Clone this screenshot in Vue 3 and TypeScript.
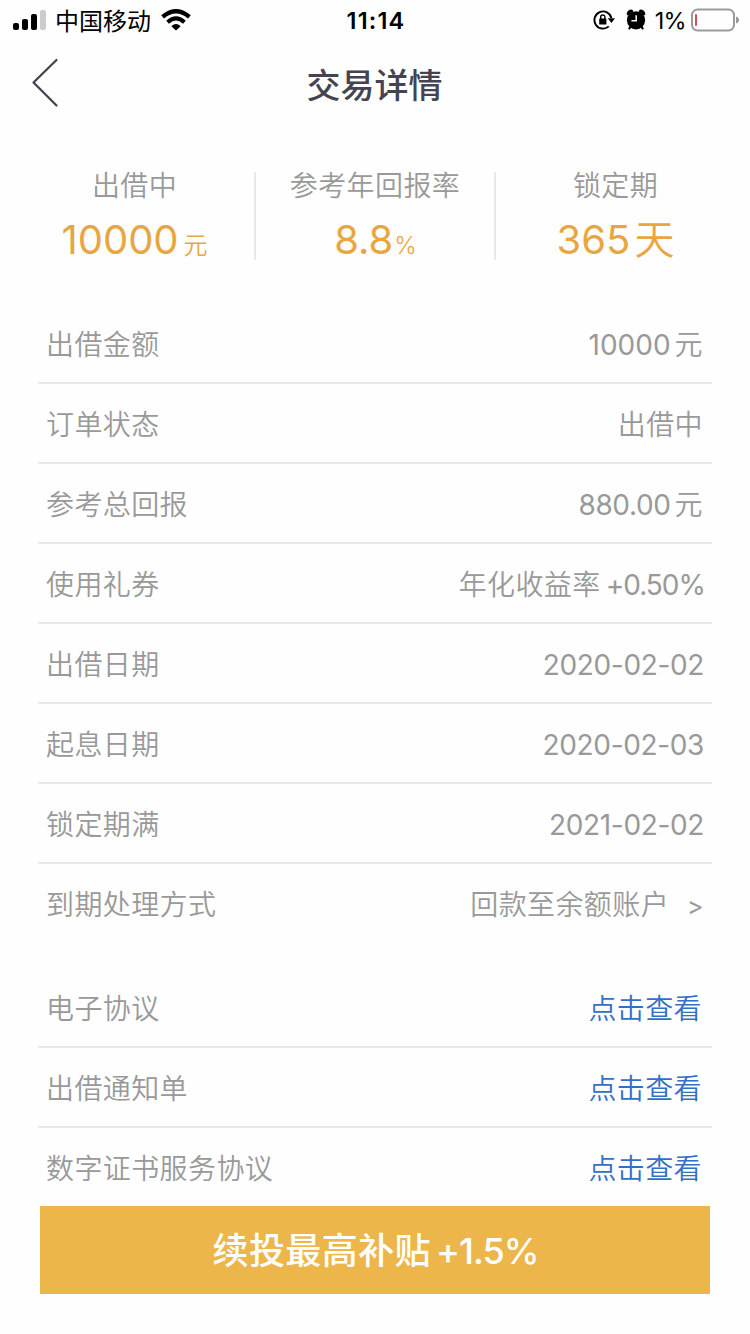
<script setup lang="ts">
interface Row {
  label: string
  value: string
  latin?: string
  unit?: string
  arrow?: boolean
  cls?: string
}

const details: Row[] = [
  { label: '出借金额', value: '', latin: '10000', unit: '元', cls: 'amount' },
  { label: '订单状态', value: '出借中' },
  { label: '参考总回报', value: '', latin: '880.00', unit: '元', cls: 'total' },
  { label: '使用礼券', value: '年化收益率', latin: '+0.50%', cls: 'coupon' },
  { label: '出借日期', value: '', latin: '2020-02-02', cls: 'date' },
  { label: '起息日期', value: '', latin: '2020-02-03', cls: 'date' },
  { label: '锁定期满', value: '', latin: '2021-02-02', cls: 'date' },
  { label: '到期处理方式', value: '回款至余额账户', arrow: true },
]

const documents: string[] = ['电子协议', '出借通知单', '数字证书服务协议']
</script>

<template>
  <main class="screen">
    <header class="status">
      <div class="side">
        <svg class="signal" width="34" height="22" viewBox="0 0 34 22">
          <rect x="0" y="14" width="6" height="7" rx="2" />
          <rect x="9" y="10" width="6" height="11" rx="2" />
          <rect x="18" y="5" width="6" height="16" rx="2" />
          <rect x="27" y="1" width="6" height="20" rx="2" fill="#ccc" />
        </svg>
        <span class="carrier">中国移动</span>
        <svg class="wifi" width="30" height="22" viewBox="0 0 30 22">
          <path d="M1.6 7.9Q15-3.5 28.4 7.9" fill="none" stroke="#000" stroke-width="4.3" />
          <path d="M6.6 13.2Q15 5.6 23.4 13.2" fill="none" stroke="#000" stroke-width="4" />
          <path d="M10.3 17.2Q15 13 19.7 17.2L15 21.6Z" />
        </svg>
      </div>
      <span class="clock">11:14</span>
      <div class="side right">
        <svg class="lock" width="22" height="22" viewBox="0 0 22 22">
          <path d="M15.8 17.4A8.6 8.6 0 1 1 18.4 9" fill="none" stroke="#000" stroke-width="1.9" />
          <path d="M14.7 9.3H22L18.4 14Z" />
          <rect x="6.2" y="9.4" width="7.2" height="6.2" rx=".7" />
          <path d="M7.7 10V8.1a2.1 2.1 0 0 1 4.2 0V10" fill="none" stroke="#000" stroke-width="1.4" />
        </svg>
        <svg class="alarm" width="20" height="22" viewBox="0 0 20 22">
          <circle cx="10" cy="11.3" r="9.1" />
          <path d="M4.5 17.5L3 20.3M15.5 17.5L17 20.3" stroke="#000" stroke-width="2.2" />
          <path d="M.6 5.2Q1 .6 6 .4L7.5 2.2L2 6.8ZM19.4 5.2Q19 .6 14 .4L12.5 2.2L18 6.8Z" />
          <path d="M10.2 6.2V11.8H5.4" fill="none" stroke="#fff" stroke-width="1.5" />
        </svg>
        <span class="percent">1%</span>
        <svg class="battery" width="48" height="24" viewBox="0 0 48 24">
          <rect x="1" y="1.5" width="42" height="21" rx="5.5" fill="none" stroke="#999" stroke-width="2" />
          <rect x="4" y="6" width="2" height="12" rx="1" fill="#d34d55" />
          <path d="M45 8.5Q48 9.5 48 12T45 15.5Z" fill="#999" />
        </svg>
      </div>
    </header>

    <nav class="nav">
      <svg class="back" width="28" height="50" viewBox="0 0 28 50">
        <path d="M25.5 2L2.5 24.5L25.5 47.5" fill="none" stroke="#454350" stroke-width="2.3" stroke-linecap="round" stroke-linejoin="round" />
      </svg>
      <h1>交易详情</h1>
    </nav>

    <section class="summary">
      <div class="metric first">
        <span class="caption">出借中</span>
        <div class="figure principal">10000<small>元</small></div>
      </div>
      <div class="metric second">
        <span class="caption">参考年回报率</span>
        <div class="figure rate">8.8<small>%</small></div>
      </div>
      <div class="metric third">
        <span class="caption">锁定期</span>
        <div class="figure term">365<span class="day">天</span></div>
      </div>
    </section>

    <section class="list">
      <div v-for="row in details" :key="row.label" class="row">
        <span>{{ row.label }}</span>
        <div class="value">
          <span v-if="row.value">{{ row.value }}</span>
          <span v-if="row.latin" class="latin" :class="row.cls">{{ row.latin }}</span>
          <span v-if="row.unit">{{ row.unit }}</span>
          <span v-if="row.arrow" class="arrow">&gt;</span>
        </div>
      </div>
    </section>

    <section class="list documents">
      <div v-for="name in documents" :key="name" class="row">
        <span>{{ name }}</span>
        <a class="link">点击查看</a>
      </div>
    </section>

    <button class="action" type="button">续投最高补贴<span>+1.5%</span></button>
  </main>
</template>

<style>
body {
  margin: 0;
  background: #fefefe;
}
</style>

<style scoped>
.screen {
  width: 750px;
  height: 1334px;
  overflow: hidden;
  background: #fefefe;
  color: #999;
  font-family: Inter, "Noto Sans CJK SC", sans-serif;
  font-weight: 350;
}
.status {
  display: grid;
  grid-template-columns: 1fr auto 1fr;
  align-items: center;
  height: 40px;
  padding: 0 11px 0 13px;
  color: #000;
}
.side {
  display: flex;
  align-items: center;
}
.right {
  justify-content: flex-end;
}
.signal {
  margin-right: 8px;
}
.carrier {
  padding-top: 3px;
  font-size: 24px;
  line-height: 37px;
  font-weight: 400;
}
.wifi {
  margin-left: 10px;
}
.clock {
  font-size: 23.5px;
  font-weight: 600;
  letter-spacing: 1.2px;
}
.lock {
  margin-right: 11px;
}
.alarm {
  margin-right: 9px;
}
.percent {
  font-size: 23.5px;
  font-weight: 400;
  letter-spacing: -0.7px;
  margin-right: 5px;
}
.battery {
  margin-right: 0;
}
.nav {
  display: grid;
  grid-template-columns: 28px 1fr 28px;
  align-items: center;
  height: 88px;
  padding: 0 32px 0 31px;
}
.back {
  margin-top: -2px;
}
h1 {
  margin: 0;
  padding-top: 3px;
  text-align: center;
  color: #454350;
  font-size: 34px;
  font-weight: 500;
  line-height: 85px;
}
.summary {
  display: grid;
  grid-template-columns: 241px 240px 239px;
  height: 88px;
  margin: 44px 15px;
}
.metric {
  display: flex;
  flex-direction: column;
  align-items: center;
  height: 88px;
  box-sizing: border-box;
}
.metric:not(.third) {
  border-right: 2px solid #e8e8e8;
}
.caption {
  padding-top: 1px;
  font-size: 28px;
  line-height: 26px;
  letter-spacing: 0.4px;
}
.figure {
  display: flex;
  align-items: baseline;
  color: #e8a642;
  font-size: 40px;
  font-weight: 400;
  line-height: 48px;
  margin-top: 17px;
}
.figure small {
  font-size: 24px;
  font-weight: 350;
}
.principal small {
  margin-left: 5px;
}
.rate small {
  margin-left: 1px;
  letter-spacing: -1px;
}
.day {
  margin-left: 4px;
  font-weight: 350;
}
.list {
  margin: 0 38px;
}
.row {
  display: flex;
  justify-content: space-between;
  align-items: center;
  box-sizing: border-box;
  height: 80px;
  padding: 4px 9px 0 8px;
  border-bottom: 2px solid #e8e8e8;
  font-size: 28px;
  line-height: 40px;
  letter-spacing: 0.4px;
}
.row:last-child {
  border-bottom-color: transparent;
}
.value {
  display: flex;
  align-items: baseline;
}
.latin {
  font-weight: 400;
  letter-spacing: -0.35px;
}
.amount,
.total {
  margin-right: 4px;
}
.amount {
  letter-spacing: 0;
}
.coupon {
  margin-left: 5px;
  margin-right: -2px;
  letter-spacing: -1px;
}
.date {
  margin-right: -1px;
}
.arrow {
  margin-left: 18px;
  margin-right: -1px;
  font-size: 25px;
  font-weight: 400;
}
.documents {
  margin-top: 24px;
}
.link {
  margin-right: 1px;
  color: #3370c4;
}
.action {
  display: block;
  position: relative;
  width: 670px;
  height: 88px;
  margin: -2px 40px 0;
  padding: 3px 0 0 1px;
  border: 0;
  background: #ecb64b;
  color: #fff;
  font-family: inherit;
  font-size: 36px;
  font-weight: 500;
  line-height: 85px;
  letter-spacing: 0.4px;
}
.action span {
  margin-left: 5px;
  letter-spacing: -1px;
}
</style>
